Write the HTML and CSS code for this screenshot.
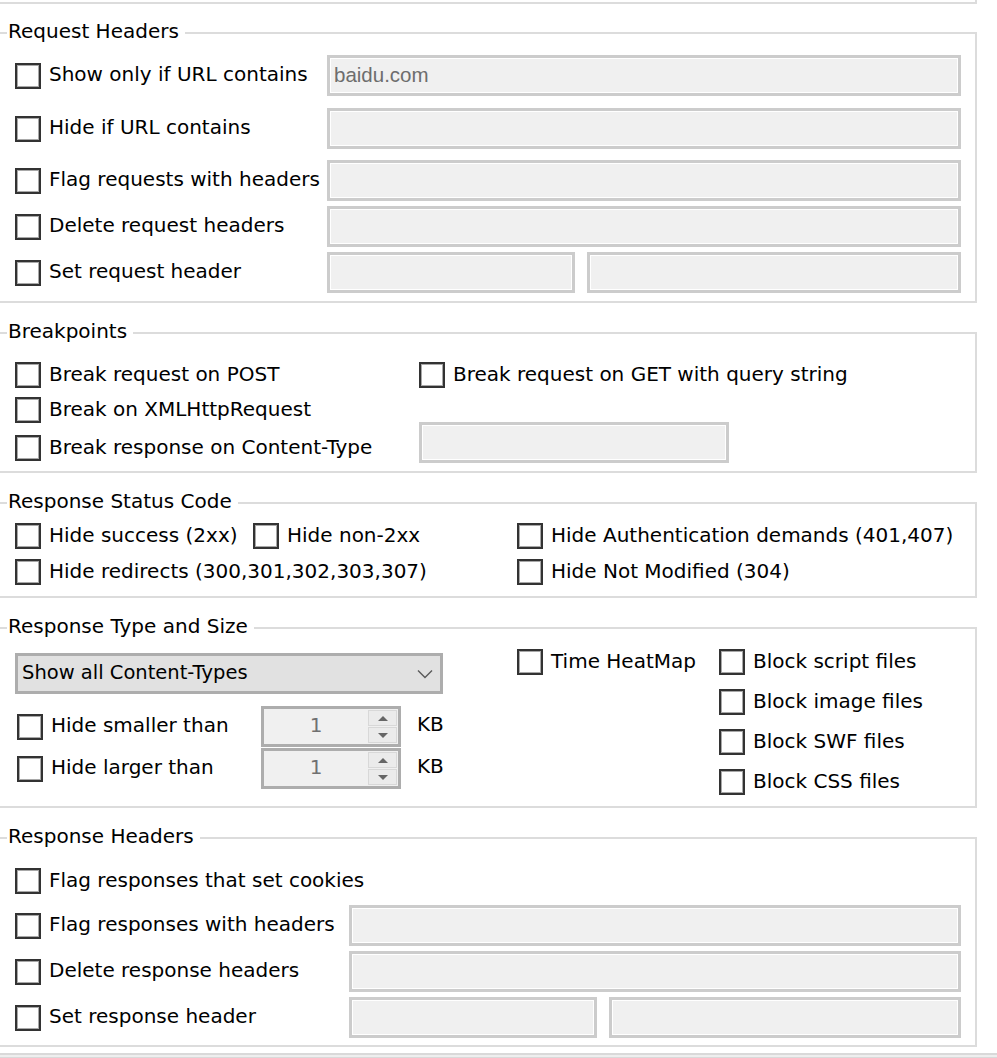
FILE: index.html
```html
<!DOCTYPE html>
<html lang="en">
<head>
<meta charset="utf-8">
<title>Filters</title>
<link rel="stylesheet" href="styles.css">
</head>
<body>
<div class="panel">
  <div class="stub"></div>

  <fieldset class="gb">
    <legend>Request Headers</legend>
    <div class="body req">
      <div class="row tbrow r1">
        <label class="chk w-req"><span class="box"></span><span class="lt">Show only if URL contains</span></label>
        <div class="tb grow"><span class="tb-text">baidu.com</span></div>
      </div>
      <div class="row tbrow r2">
        <label class="chk w-req"><span class="box"></span><span class="lt">Hide if URL contains</span></label>
        <div class="tb grow"></div>
      </div>
      <div class="row tbrow r3">
        <label class="chk w-req"><span class="box"></span><span class="lt">Flag requests with headers</span></label>
        <div class="tb grow"></div>
      </div>
      <div class="row tbrow r4">
        <label class="chk w-req"><span class="box"></span><span class="lt">Delete request headers</span></label>
        <div class="tb grow"></div>
      </div>
      <div class="row tbrow r5">
        <label class="chk w-req"><span class="box"></span><span class="lt">Set request header</span></label>
        <div class="tb w-half"></div>
        <div class="tb grow"></div>
      </div>
    </div>
  </fieldset>

  <fieldset class="gb">
    <legend>Breakpoints</legend>
    <div class="body bp">
      <div class="row bp-a">
        <label class="chk w-bp"><span class="box"></span><span class="lt">Break request on POST</span></label>
        <label class="chk"><span class="box"></span><span class="lt">Break request on GET with query string</span></label>
      </div>
      <div class="row bp-b">
        <label class="chk w-bp"><span class="box"></span><span class="lt">Break on XMLHttpRequest</span></label>
      </div>
      <div class="row bp-c">
        <label class="chk w-bp low"><span class="box"></span><span class="lt">Break response on Content-Type</span></label>
        <div class="tb w-ct"></div>
      </div>
    </div>
  </fieldset>

  <fieldset class="gb">
    <legend>Response Status Code</legend>
    <div class="body rsc">
      <div class="row rsc-1">
        <label class="chk w-s1"><span class="box"></span><span class="lt">Hide success (2xx)</span></label>
        <label class="chk w-s2"><span class="box"></span><span class="lt">Hide non-2xx</span></label>
        <label class="chk"><span class="box"></span><span class="lt">Hide Authentication demands (401,407)</span></label>
      </div>
      <div class="row rsc-2">
        <label class="chk w-s12"><span class="box"></span><span class="lt">Hide redirects (300,301,302,303,307)</span></label>
        <label class="chk"><span class="box"></span><span class="lt">Hide Not Modified (304)</span></label>
      </div>
    </div>
  </fieldset>

  <fieldset class="gb">
    <legend>Response Type and Size</legend>
    <div class="body rts">
      <div class="col-left">
        <div class="select">
          <span class="select-text">Show all Content-Types</span>
          <svg class="chev" width="16" height="10" viewBox="0 0 16 10"><polyline points="1,1.5 8,8.5 15,1.5" fill="none" stroke="#5a5a5a" stroke-width="1.4"/></svg>
        </div>
        <div class="row spinrow sp1">
          <label class="chk w-sp"><span class="box"></span><span class="lt">Hide smaller than</span></label>
          <div class="spin">
            <span class="spin-val">1</span>
            <span class="spin-btns"><span class="sbtn"><i class="up"></i></span><span class="sbtn"><i class="down"></i></span></span>
          </div>
          <span class="unit">KB</span>
        </div>
        <div class="row spinrow sp2">
          <label class="chk w-sp"><span class="box"></span><span class="lt">Hide larger than</span></label>
          <div class="spin">
            <span class="spin-val">1</span>
            <span class="spin-btns"><span class="sbtn"><i class="up"></i></span><span class="sbtn"><i class="down"></i></span></span>
          </div>
          <span class="unit">KB</span>
        </div>
      </div>
      <div class="col-mid">
        <label class="chk"><span class="box"></span><span class="lt">Time HeatMap</span></label>
      </div>
      <div class="col-right">
        <label class="chk"><span class="box"></span><span class="lt">Block script files</span></label>
        <label class="chk"><span class="box"></span><span class="lt">Block image files</span></label>
        <label class="chk"><span class="box"></span><span class="lt">Block SWF files</span></label>
        <label class="chk"><span class="box"></span><span class="lt">Block CSS files</span></label>
      </div>
    </div>
  </fieldset>

  <fieldset class="gb">
    <legend>Response Headers</legend>
    <div class="body resp">
      <div class="row rh-1">
        <label class="chk"><span class="box"></span><span class="lt">Flag responses that set cookies</span></label>
      </div>
      <div class="row tbrow rh-2">
        <label class="chk w-resp"><span class="box"></span><span class="lt">Flag responses with headers</span></label>
        <div class="tb grow"></div>
      </div>
      <div class="row tbrow rh-3">
        <label class="chk w-resp"><span class="box"></span><span class="lt">Delete response headers</span></label>
        <div class="tb grow"></div>
      </div>
      <div class="row tbrow rh-4">
        <label class="chk w-resp"><span class="box"></span><span class="lt">Set response header</span></label>
        <div class="tb w-half"></div>
        <div class="tb grow"></div>
      </div>
    </div>
  </fieldset>
</div>
<div class="strip"></div>
</body>
</html>
```

FILE: styles.css
```css
* { box-sizing: border-box; }

html, body {
  margin: 0;
  padding: 0;
  background: #ffffff;
}

body {
  font-family: "DejaVu Sans", Verdana, sans-serif;
  font-size: 20px;
  color: #000000;
  width: 997px;
  overflow: hidden;
}

.panel {
  width: 977px;
}

.stub {
  height: 4px;
  border-right: 2px solid #dcdcdc;
  border-bottom: 2px solid #dcdcdc;
}

/* group boxes */
.gb {
  margin: 18px 0 0 0;
  padding: 0;
  border: 2px solid #dcdcdc;
  border-left: none;
  min-width: 0;
}

.gb + .gb {
  margin-top: 19px;
}

.gb legend {
  margin-left: 7px;
  padding: 0 6px 3px 1px;
  height: 22px;
  line-height: 19px;
  font-size: 20px;
  white-space: nowrap;
}

.body {
  padding: 0 14px 0 15px;
}

.row {
  display: flex;
  align-items: center;
}

/* checkbox + label */
.chk {
  display: flex;
  align-items: center;
  height: 26px;
  white-space: nowrap;
  flex: none;
}

.lt {
  line-height: 24px;
  padding-bottom: 3px;
}

.box {
  width: 26px;
  height: 26px;
  border: 2px solid #333333;
  box-shadow: inset 0 0 0 1px #a8a8a8;
  background: #ffffff;
  margin-right: 8px;
  flex: none;
}

/* text boxes */
.tb {
  height: 41px;
  border: 3px solid #cccccc;
  box-shadow: inset 0 0 0 1px #ffffff;
  background: #f0f0f0;
  display: flex;
  align-items: center;
}

.tb.grow { flex: 1; }
.tb.w-half { width: 248px; margin-right: 12px; flex: none; }

.tb-text {
  font-family: "Liberation Sans", Arial, sans-serif;
  font-size: 20.5px;
  color: #6d6d6d;
  padding-left: 4px;
  padding-bottom: 2px;
}

.tbrow { height: 41px; }

/* Request headers */
.req { padding-bottom: 8px; }
.w-req { width: 312px; }
.req .r1 { margin-top: 11px; }
.req .r2 { margin-top: 12px; }
.req .r3 { margin-top: 11px; }
.req .r4 { margin-top: 5px; }
.req .r5 { margin-top: 5px; }

/* Breakpoints */
.bp { padding-top: 18px; padding-bottom: 8px; }
.w-bp { width: 404px; }
.bp-a { height: 26px; }
.bp-b { height: 24px; margin-top: 10px; }
.bp-c { height: 41px; }
.chk.low { align-self: flex-end; margin-bottom: 2px; }
.tb.w-ct { width: 310px; flex: none; }

/* Response status code */
.rsc { padding-top: 9px; padding-bottom: 11px; }
.rsc-1 { height: 26px; }
.rsc-2 { height: 26px; margin-top: 10px; }
.w-s1 { width: 238px; }
.w-s2 { width: 264px; }
.w-s12 { width: 502px; }

/* Response type and size */
.rts {
  height: 167px;
  display: flex;
  align-items: flex-start;
}

.col-left {
  width: 502px;
  flex: none;
  padding-top: 14px;
}

.select {
  width: 428px;
  height: 41px;
  border: 3px solid #adadad;
  background: #e1e1e1;
  display: flex;
  align-items: center;
  justify-content: space-between;
  padding: 0 7px 0 4px;
}

.select-text {
  font-size: 19.5px;
  white-space: nowrap;
  padding-bottom: 2px;
}

.chev { display: block; flex: none; }

.spinrow {
  height: 41px;
  padding-left: 2px;
}

.sp1 { margin-top: 12px; }
.sp2 { margin-top: 1px; }

.w-sp { width: 244px; }

.spin {
  width: 140px;
  height: 41px;
  border: 3px solid #adadad;
  background: #f0f0f0;
  display: flex;
  flex: none;
}

.spin-val {
  flex: 1;
  text-align: center;
  line-height: 33px;
  color: #707070;
  font-size: 20px;
}

.spin-btns {
  width: 30px;
  display: flex;
  flex-direction: column;
  gap: 1px;
  padding: 1px 1px 1px 0;
}

.sbtn {
  height: 16px;
  background: #ebebeb;
  border: 1px solid #d8d8d8;
  display: flex;
  align-items: center;
  justify-content: center;
}

.sbtn i {
  width: 0;
  height: 0;
  border-left: 5px solid transparent;
  border-right: 5px solid transparent;
}

.sbtn i.up { border-bottom: 5px solid #666666; }
.sbtn i.down { border-top: 5px solid #666666; }

.unit {
  margin-left: 16px;
  white-space: nowrap;
  padding-bottom: 5px;
}

.col-mid {
  width: 202px;
  flex: none;
  padding-top: 10px;
}

.col-right {
  flex: 1;
  padding-top: 10px;
  display: flex;
  flex-direction: column;
  gap: 14px;
}

/* Response headers */
.resp { padding-top: 19px; padding-bottom: 7px; }
.rh-1 { height: 26px; }
.rh-2 { margin-top: 11px; }
.rh-3 { margin-top: 5px; }
.rh-4 { margin-top: 5px; }
.w-resp { width: 334px; }

/* bottom strip */
.strip {
  margin-top: 6px;
  width: 997px;
  height: 6px;
  border-top: 2px solid #d9d9d9;
  border-bottom: 2px solid #d9d9d9;
  background: #eeeeee;
}
```
